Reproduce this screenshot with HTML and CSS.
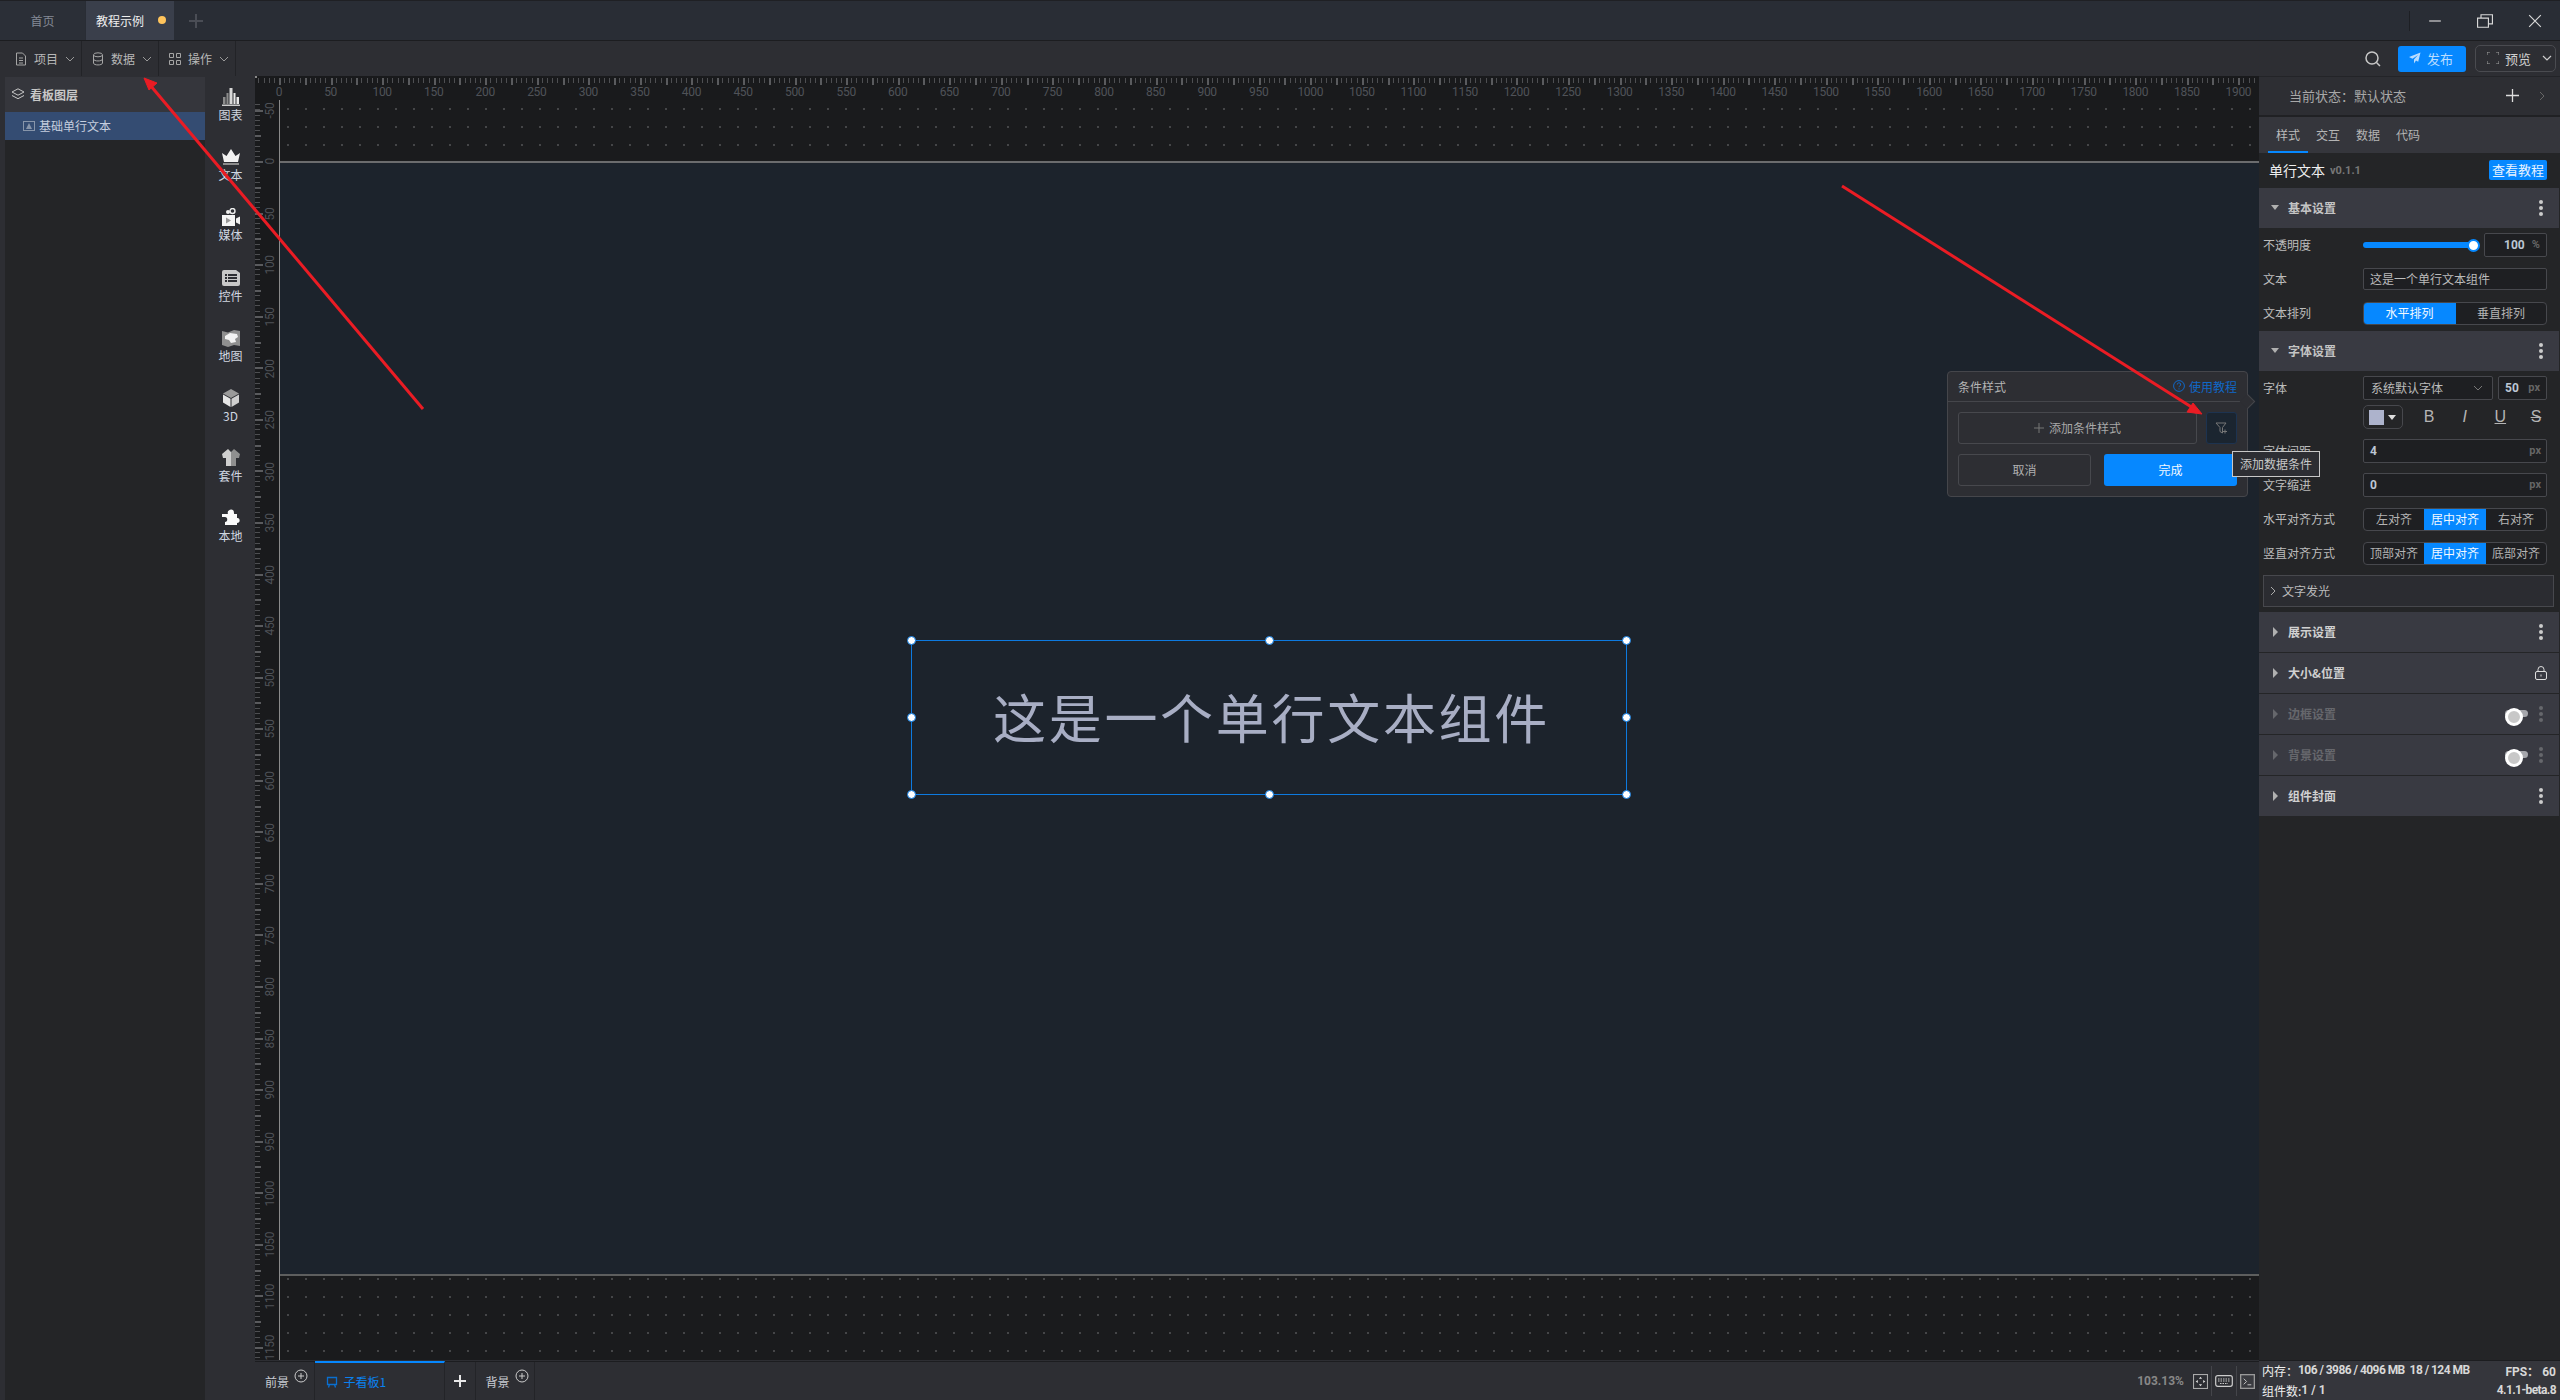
FILE: index.html
```html
<!DOCTYPE html>
<html lang="zh-CN">
<head>
<meta charset="utf-8">
<title>教程示例</title>
<link rel="stylesheet" href="styles.css">
</head>
<body>
<div class="app">
  <header class="tabbar">
    <div class="tab">首页</div>
    <div class="tab tab-on">教程示例<i class="dot"></i></div>
    <svg class="tab-add" viewBox="0 0 14 14"><path d="M7 0v14M0 7h14" stroke="#4a4d55" stroke-width="2" fill="none"/></svg>
    <div class="win">
      <i class="win-sep"></i>
      <svg class="win-ic" viewBox="0 0 12 12"><path d="M1 6h10" stroke="#d8d8d8" fill="none"/></svg>
      <svg class="win-ic" viewBox="0 0 14 12"><path d="M.5 3.500h9.500v8h-9.500zM3.500 3V.5h10v8H10.500" stroke="#d8d8d8" fill="none"/></svg>
      <svg class="win-ic" viewBox="0 0 12 12"><path d="M1 1l10 10M11 1L1 11" stroke="#d8d8d8" fill="none"/></svg>
    </div>
  </header>
  <nav class="toolbar">
    <div class="menu m1">
      <svg class="ic14" viewBox="0 0 14 14"><path d="M2.500 1h6l3 3v9h-9zM5 6h4M5 8.500h4M5 11h4" stroke="#a5a5a5" fill="none"/></svg>
      <span>项目</span><svg class="chev" viewBox="0 0 10 6"><path d="M1 1l4 4 4-4" stroke="#999" fill="none"/></svg>
    </div>
    <div class="menu m2">
      <svg class="ic14" viewBox="0 0 14 14"><ellipse cx="7" cy="2.800" rx="4.500" ry="2" stroke="#a5a5a5" fill="none"/><path d="M2.500 3v8c0 2.600 9 2.600 9 0V3M2.500 7c0 2.600 9 2.600 9 0" stroke="#a5a5a5" fill="none"/></svg>
      <span>数据</span><svg class="chev" viewBox="0 0 10 6"><path d="M1 1l4 4 4-4" stroke="#999" fill="none"/></svg>
    </div>
    <div class="menu m2">
      <svg class="ic14" viewBox="0 0 14 14"><path d="M1.500 1.500h4v4h-4zM8.500 1.500h4v4h-4zM1.500 8.500h4v4h-4zM8.500 8.500h4v4h-4z" stroke="#a5a5a5" fill="none"/></svg>
      <span>操作</span><svg class="chev" viewBox="0 0 10 6"><path d="M1 1l4 4 4-4" stroke="#999" fill="none"/></svg>
    </div>
    <div class="tool-right">
      <svg class="search" viewBox="0 0 16 16"><circle cx="7" cy="7" r="6" stroke="#c8c8c8" stroke-width="1.500" fill="none"/><path d="M11.500 11.500l3.500 3.500" stroke="#c8c8c8" stroke-width="1.500"/></svg>
      <button class="publish"><svg class="ic11" viewBox="0 0 12 12"><path d="M11.500.5L0 5l3.500 1.800L9 3 5 7.500V11.500l2-3 2.200 1.200z" fill="#b9dcff"/></svg>发布</button>
      <button class="preview"><svg class="ic12" viewBox="0 0 12 12"><path d="M0 3V0h3M9 0h3v3M12 9v3H9M3 12H0V9" stroke="#a0a0a0" fill="none"/></svg><span>预览</span><svg class="chev wide" viewBox="0 0 10 6"><path d="M1 1l4 4 4-4" stroke="#ccc" stroke-width="1.200" fill="none"/></svg></button>
    </div>
  </nav>
  <main class="main">
    <aside class="layers">
      <div class="layers-head">
        <svg class="ic14" viewBox="0 0 14 12"><path d="M7 .8l6 3.200-6 3.200L1 4zM1 7.500l6 3.200 6-3.200" stroke="#c8c8c8" fill="none"/></svg>
        看板图层
      </div>
      <div class="layer-row">
        <svg class="ic12" viewBox="0 0 12 10"><rect x=".5" y=".5" width="11" height="9" stroke="#8795aa" fill="none"/><path d="M3 8l3-6 3 6z" fill="#8795aa"/></svg>
        基础单行文本
      </div>
    </aside>
    <aside class="rail">
      <div class="rail-item"><svg class="rail-ic" viewBox="0 0 18 18"><path d="M0 16.500h18v1.500H0z" fill="#ccc"/><path d="M1 9h2.500v7H1zM4.500 5h2v11h-2z" fill="#8c8c8c"/><path d="M7.500 0h3v16h-3z" fill="#d8d8d8"/><path d="M11.500 5h2v11h-2zM14.500 9H17v7h-2.500z" fill="#e8e8e8"/></svg><span>图表</span></div>
      <div class="rail-item"><svg class="rail-ic" viewBox="0 0 18 18"><path d="M0 5l4.500 3L9 1l4.500 7L18 5l-2 9H2z" fill="#f2f2f2"/><path d="M1 15h16v2H1z" fill="#8c8c8c"/></svg><span>文本</span></div>
      <div class="rail-item"><svg class="rail-ic" viewBox="0 0 18 18"><circle cx="6" cy="4" r="2" fill="#eee"/><circle cx="10.500" cy="3" r="2.500" stroke="#eee" stroke-width="1.400" fill="none"/><path d="M0 7h13v11H0z" fill="#f5f5f5"/><path d="M14 10.500l4-2v8l-4-2z" fill="#f0f0f0"/><path d="M4 9.500l5 3-5 3z" fill="#999"/></svg><span>媒体</span></div>
      <div class="rail-item"><svg class="rail-ic" viewBox="0 0 18 18"><path d="M2 1h12l4 3v11a2 2 0 0 1-2 2H2a2 2 0 0 1-2-2V3a2 2 0 0 1 2-2z" fill="#c8c8c8"/><path d="M3 5h2v2H3zM3 8h2v2H3zM3 11h2v2H3zM6 5h9v2H6zM6 8h9v2H6zM6 11h9v2H6z" fill="#2d2e33"/></svg><span>控件</span></div>
      <div class="rail-item"><svg class="rail-ic" viewBox="0 0 18 18"><path d="M0 2l6 1.500L12 1l6 1v15l-6-1-6 2-6-2z" fill="#8f8f8f"/><path d="M3 7l5-3 7 1 1 3-3 2 1 3-5 1-2-3-4-1z" fill="#f2f2f2"/></svg><span>地图</span></div>
      <div class="rail-item"><svg class="rail-ic" viewBox="0 0 18 18"><path d="M9 0l8 4.500-8 4.500-8-4.500z" fill="#9a9a9a"/><path d="M1 5.500l7.500 4.300V18L1 13.500z" fill="#e6e6e6"/><path d="M17 5.500L9.500 9.800V18l7.500-4.500z" fill="#cfcfcf"/></svg><span>3D</span></div>
      <div class="rail-item"><svg class="rail-ic" viewBox="0 0 18 18"><path d="M6 0L0 5l1 4 3 0v8h5V3z" fill="#cfcfcf"/><path d="M12 0l6 5-1 4-3 0v8H9V3z" fill="#8f8f8f"/></svg><span>套件</span></div>
      <div class="rail-item"><svg class="rail-ic" viewBox="0 0 18 18"><path d="M6 5c-2-4 6-7 6-1 0 1 0 1 1 1h2v4c3-1 4 5 0 5v2H3v-3c3 0 3-5 0-5H0V5z" fill="#fafafa"/></svg><span>本地</span></div>
    </aside>
    <section class="workspace">
      <div class="ruler-h">
        <i class="corner"></i>
        <div class="h-labels">
          <span>0</span><span>50</span><span>100</span><span>150</span><span>200</span><span>250</span><span>300</span><span>350</span><span>400</span><span>450</span><span>500</span><span>550</span><span>600</span><span>650</span><span>700</span><span>750</span><span>800</span><span>850</span><span>900</span><span>950</span><span>1000</span><span>1050</span><span>1100</span><span>1150</span><span>1200</span><span>1250</span><span>1300</span><span>1350</span><span>1400</span><span>1450</span><span>1500</span><span>1550</span><span>1600</span><span>1650</span><span>1700</span><span>1750</span><span>1800</span><span>1850</span><span>1900</span>
        </div>
      </div>
      <div class="canvas-row">
        <div class="ruler-v">
          <div class="v-labels">
            <span>-50</span><span>0</span><span>50</span><span>100</span><span>150</span><span>200</span><span>250</span><span>300</span><span>350</span><span>400</span><span>450</span><span>500</span><span>550</span><span>600</span><span>650</span><span>700</span><span>750</span><span>800</span><span>850</span><span>900</span><span>950</span><span>1000</span><span>1050</span><span>1100</span><span>1150</span>
          </div>
        </div>
        <div class="canvas">
          <div class="stage">
            <div class="sel">
              <i class="h h1"></i><i class="h h2"></i><i class="h h3"></i><i class="h h4"></i><i class="h h5"></i><i class="h h6"></i><i class="h h7"></i><i class="h h8"></i>
              <div class="sel-text">这是一个单行文本组件</div>
            </div>
          </div>
        </div>
      </div>
      <footer class="bottombar">
        <div class="bt bt-fg">前景<svg class="plus-c" viewBox="0 0 14 14"><circle cx="7" cy="7" r="6" stroke="#ccc" fill="none"/><path d="M4 7h6M7 4v6" stroke="#ccc" fill="none"/></svg></div>
        <div class="bt bt-sub"><svg class="ic12" viewBox="0 0 12 12"><path d="M1.500 1.500h9v7h-9zM3.500 8.500L2.500 11.500M8.500 8.500l1 3" stroke="#0a6fd0" stroke-width="1.300" fill="none"/></svg>子看板1</div>
        <div class="bt bt-add"><svg class="ic12" viewBox="0 0 12 12"><path d="M6 0v12M0 6h12" stroke="#e8e8e8" stroke-width="2" fill="none"/></svg></div>
        <div class="bt bt-fg">背景<svg class="plus-c" viewBox="0 0 14 14"><circle cx="7" cy="7" r="6" stroke="#ccc" fill="none"/><path d="M4 7h6M7 4v6" stroke="#ccc" fill="none"/></svg></div>
        <div class="bt-right">
          <span class="zoomv">103.13%</span>
          <svg class="ic14b" viewBox="0 0 14 14"><rect x=".5" y=".5" width="13" height="13" stroke="#aaa" fill="none"/><path d="M7 2.500l1.500 2h-3zM7 11.500l1.500-2h-3zM2.500 7l2-1.500v3zM11.500 7l-2-1.500v3z" fill="#ddd"/></svg>
          <i class="bt-sep"></i>
          <svg class="kbd" viewBox="0 0 18 12"><rect x=".7" y=".7" width="16.600" height="10.600" rx="2" stroke="#ccc" stroke-width="1.200" fill="none"/><path d="M3 4h12M3 6h12M5 8.500h8" stroke="#ccc" stroke-dasharray="1.500 1"/></svg>
          <i class="bt-sep"></i>
          <svg class="ic14b" viewBox="0 0 16 16"><rect x=".7" y=".7" width="14.600" height="14.600" stroke="#999" stroke-width="1.400" fill="#3a3b40"/><path d="M4 5l3 3-3 3M8 11.500h4" stroke="#ccc" fill="none"/></svg>
        </div>
      </footer>
    </section>
    <aside class="props">
      <div class="state">
        <span>当前状态：默认状态</span>
        <svg class="state-plus" viewBox="0 0 13 13"><path d="M6.500 0v13M0 6.500h13" stroke="#ddd" stroke-width="1.300" fill="none"/></svg>
        <svg class="state-next" viewBox="0 0 6 10"><path d="M1 1l4 4-4 4" stroke="#666" fill="none"/></svg>
      </div>
      <div class="ptabs"><span class="ptab on">样式</span><span class="ptab">交互</span><span class="ptab">数据</span><span class="ptab">代码</span></div>
      <div class="ptitle"><strong>单行文本</strong><em>v0.1.1</em><button>查看教程</button></div>
      <div class="sec"><i class="tri-d"></i><b>基本设置</b><i class="dots"></i></div>
      <div class="row"><label>不透明度</label>
        <div class="slider"><i class="thumb"></i></div>
        <div class="inp inp-op"><b>100</b><small>%</small></div>
      </div>
      <div class="row"><label>文本</label><div class="inp inp-text">这是一个单行文本组件</div></div>
      <div class="row"><label>文本排列</label><div class="seg seg2"><span class="on">水平排列</span><span>垂直排列</span></div></div>
      <div class="sec sec-gap"><i class="tri-d"></i><b>字体设置</b><i class="dots"></i></div>
      <div class="row"><label>字体</label>
        <div class="inp inp-sel">系统默认字体<svg class="chev" viewBox="0 0 10 6"><path d="M1 1l4 4 4-4" stroke="#777" fill="none"/></svg></div>
        <div class="inp inp-num"><b>50</b><small>px</small></div>
      </div>
      <div class="row row-color">
        <div class="colorbox"><i class="swatch"></i><i class="tri-w"></i></div>
        <div class="fmt"><span class="f-b">B</span><span class="f-i">I</span><span class="f-u">U</span><span class="f-s">S</span></div>
      </div>
      <div class="row"><label>字体间距</label><div class="inp inp-wide"><b>4</b><small>px</small></div></div>
      <div class="row"><label>文字缩进</label><div class="inp inp-wide"><b>0</b><small>px</small></div></div>
      <div class="row"><label>水平对齐方式</label><div class="seg seg3"><span>左对齐</span><span class="on">居中对齐</span><span>右对齐</span></div></div>
      <div class="row"><label>竖直对齐方式</label><div class="seg seg3"><span>顶部对齐</span><span class="on">居中对齐</span><span>底部对齐</span></div></div>
      <div class="glow"><svg class="chev-r" viewBox="0 0 6 10"><path d="M1 1l4 4-4 4" stroke="#aaa" fill="none"/></svg>文字发光</div>
      <div class="sec sec-list"><i class="tri-r"></i><b>展示设置</b><i class="dots"></i></div>
      <div class="sec sec-list"><i class="tri-r"></i><b>大小&amp;位置</b><svg class="lock" viewBox="0 0 12 14"><rect x=".5" y="5.500" width="11" height="8" rx="1.500" stroke="#ddd" fill="none"/><path d="M3 5.500V3.500a3 3 0 0 1 6 0v2M6 8.500v2" stroke="#ddd" fill="none"/></svg></div>
      <div class="sec sec-list off"><i class="tri-r"></i><b>边框设置</b><i class="sw"></i><i class="dots"></i></div>
      <div class="sec sec-list off"><i class="tri-r"></i><b>背景设置</b><i class="sw"></i><i class="dots"></i></div>
      <div class="sec sec-list"><i class="tri-r"></i><b>组件封面</b><i class="dots"></i></div>
      <div class="status">
        <div class="st-row"><span>内存：</span><b class="st-mem">106 / 3986 / 4096 MB&nbsp; 18 / 124 MB</b><b class="st-r">FPS：&nbsp;60</b></div>
        <div class="st-row"><span>组件数:</span><b>1 / 1</b><b class="st-r st-ver">4.1.1-beta.8</b></div>
      </div>
    </aside>
  </main>

  <div class="pop">
    <div class="pop-head"><span>条件样式</span><a><svg class="ic12" viewBox="0 0 12 12"><circle cx="6" cy="6" r="5.400" stroke="#1068c8" fill="none"/><path d="M4.300 4.500a1.700 1.700 0 1 1 2.500 1.500c-.6.3-.8.600-.8 1.200M6 8.400v1" stroke="#1068c8" fill="none"/></svg>使用教程</a></div>
    <div class="pop-body">
      <div class="pop-line">
        <div class="pop-add"><svg class="ic10" viewBox="0 0 10 10"><path d="M5 0v10M0 5h10" stroke="#777" fill="none"/></svg>添加条件样式</div>
        <div class="pop-filter"><svg class="ic14" viewBox="0 0 14 14"><path d="M1 2h10L7.500 6.500V12L5 10.500V6.500zM10 8.500v4M8 10.500h4" stroke="#777" fill="none"/></svg></div>
      </div>
      <div class="pop-line pop-actions"><button class="btn-c">取消</button><button class="btn-ok">完成</button></div>
    </div>
    <i class="pop-arrow"></i>
  </div>
  <div class="tip">添加数据条件</div>

  <svg class="arrows" viewBox="0 0 2560 1400">
    <path d="M423 409L150 85" stroke="#ea1c24" stroke-width="3" fill="none"/>
    <path d="M144 78l13 5-8 7z" fill="#ea1c24" stroke="#ea1c24"/>
    <path d="M1842 186L2193 408" stroke="#ea1c24" stroke-width="3" fill="none"/>
    <path d="M2202 414l-15-2 6-9z" fill="#ea1c24" stroke="#ea1c24"/>
  </svg>
</div>
</body>
</html>
```

FILE: styles.css
```css
* { box-sizing: border-box; }
html, body { margin: 0; padding: 0; background: #242527; }
body { font-family: "Noto Sans CJK SC", "Noto Sans", sans-serif; font-size: 12px; color: #c4c4c4; }
i { display: block; font-style: normal; }
button { font: inherit; border: 0; padding: 0 0 1px; }
svg { display: block; flex: none; }

.app { position: relative; width: 2560px; height: 1400px; overflow: hidden; display: flex; flex-direction: column; background: #2d2e33; }

/* tabs */
.tabbar { height: 41px; flex: none; display: flex; align-items: stretch; background: #292d35; border-top: 1px solid #1f2024; border-bottom: 1px solid #1c1d20; }
.tab { width: 85px; margin-right: 1px; background: #2b2f37; color: #848a95; display: flex; align-items: center; justify-content: center; padding-bottom: 1px; }
.tab-on { width: 88px; background: #3a3f4b; color: #f0f0f0; justify-content: flex-start; padding-left: 10px; }
.dot { width: 8px; height: 8px; border-radius: 50%; background: #ffc45c; margin-left: 14px; }
.tab-add { width: 14px; height: 14px; align-self: center; margin-left: 14px; }
.win { margin-left: auto; display: flex; align-items: center; }
.win-sep { width: 1px; height: 20px; background: #1d1f24; margin-right: 17px; }
.win-ic { width: 16px; height: 14px; margin-right: 34px; }
.win-ic:last-child { margin-right: 17px; }

/* toolbar */
.toolbar { height: 35px; flex: none; display: flex; align-items: center; background: #2d2e33; }
.menu { height: 35px; display: flex; align-items: center; border-right: 1px solid #222327; color: #b8b8b8; }
.m1 { width: 82px; padding-left: 14px; }
.m2 { width: 77px; padding-left: 9px; }
.ic14 { width: 14px; height: 14px; }
.ic12 { width: 12px; height: 12px; }
.ic11 { width: 12px; height: 12px; }
.ic10 { width: 10px; height: 10px; }
.menu span { margin-left: 6px; padding-bottom: 1px; }
.chev { width: 10px; height: 6px; margin-left: 7px; }
.tool-right { margin-left: auto; display: flex; align-items: center; padding-right: 4px; }
.search { width: 16px; height: 16px; margin-right: 17px; }
.publish { width: 68px; height: 26px; background: #0688ff; color: #b9dcff; border-radius: 3px; display: flex; align-items: center; font-size: 13px; padding-left: 11px; gap: 6px; margin-right: 9px; }
.preview { width: 81px; height: 27px; background: transparent; color: #d0d0d0; border: 1px solid #4a4b50; border-radius: 5px; display: flex; align-items: center; padding-left: 11px; font-size: 13px; gap: 6px; }
.chev.wide { margin-left: 5px; }

/* main */
.main { flex: 1; min-height: 0; display: flex; }
.layers { width: 200px; margin-left: 5px; margin-top: 1px; background: #242527; margin-right: 1px; flex: none; }
.layers-head { height: 35px; background: #35363c; display: flex; align-items: center; padding: 0 0 1px 6px; gap: 5px; font-weight: 700; color: #c8c8c8; }
.layer-row { height: 28px; background: #344c72; display: flex; align-items: center; padding: 0 0 1px 18px; gap: 4px; color: #c5cede; }
.rail { width: 49px; flex: none; padding-top: 4px; display: flex; flex-direction: column; }
.rail-item { height: 60.200px; flex: none; display: flex; flex-direction: column; align-items: center; padding-top: 8px; color: #d0d6e0; line-height: 15px; }
.rail-ic { width: 18px; height: 18px; margin-bottom: 1px; }

/* rulers */
.workspace { width: 2004px; flex: none; display: flex; flex-direction: column; }
.ruler-h {
  height: 24px; flex: none; position: relative; overflow: hidden; background-color: #191a1c;
  background-image:
    repeating-linear-gradient(90deg, #5a5b5e 24px 26px, transparent 26px 49.780px),
    repeating-linear-gradient(90deg, #4e4f52 24px 25px, transparent 25px 29.156px);
  background-size: 100% 7px, 100% 5px;
  background-position: 0 2px, 0 2px;
  background-repeat: no-repeat;
}
.corner { position: absolute; left: 0; top: 0; width: 2px; height: 2px; background: #8a8a8a; }
.h-labels { display: flex; margin-left: -1.780px; padding-top: 9px; font: 12px/14px "Liberation Sans Narrow", "Roboto", sans-serif; letter-spacing: -.3px; color: #4f5258; }
.h-labels span { flex: 0 0 51.5625px; text-align: center; }
.canvas-row { height: 1260px; flex: none; display: flex; margin-bottom: 0; }
.ruler-v {
  width: 24px; flex: none; overflow: hidden; background-color: #191a1c;
  background-image:
    repeating-linear-gradient(180deg, #5a5b5e 9.500px 11.500px, transparent 11.500px 61.060px),
    repeating-linear-gradient(180deg, #5a5b5e 35.280px 37.280px, transparent 37.280px 86.840px),
    repeating-linear-gradient(180deg, #4e4f52 9.500px 10.500px, transparent 10.500px 14.656px);
  background-size: 8px 100%, 6px 100%, 5px 100%;
  background-repeat: no-repeat;
}
.v-labels { margin-top: -15.300px; margin-left: 9px; display: flex; flex-direction: column; font: 12px/12px "Liberation Sans Narrow", "Roboto", sans-serif; letter-spacing: -.3px; color: #4f5258; }
.v-labels span { flex: 0 0 51.5625px; writing-mode: vertical-rl; transform: rotate(180deg); text-align: center; width: 12px; }
.canvas {
  flex: 1; min-width: 0; border-left: 1px solid #8a8a8a; padding-top: 61px; background-color: #1a1b1d;
  background-image: radial-gradient(circle at 9px 9px, #454648 0.900px, transparent 1.100px);
  background-size: 18px 18px; background-position: -1px 0;
}
.stage { position: relative; height: 1115px; background: #1c232c; border-top: 2px solid #6b6c6e; border-bottom: 2px solid #5d5e5e; }
.sel { position: absolute; left: 631px; top: 477px; width: 716px; height: 155px; border: 1px solid #0d7ae0; display: flex; align-items: center; justify-content: center; }
.sel-text { font-size: 53px; line-height: 70px; letter-spacing: 2.700px; color: #a8aec4; white-space: nowrap; margin: 0 0 4px 5px; }
.h { position: absolute; width: 9px; height: 9px; border-radius: 50%; background: #fff; border: 1.500px solid #0d7ae0; }
.h1 { left: -5px; top: -5px; } .h2 { left: 353px; top: -5px; } .h3 { right: -5px; top: -5px; }
.h4 { left: -5px; top: 72px; } .h5 { right: -5px; top: 72px; }
.h6 { left: -5px; bottom: -5px; } .h7 { left: 353px; bottom: -5px; } .h8 { right: -5px; bottom: -5px; }

/* bottom */
.bottombar { height: 39px; flex: none; margin-top: 1px; display: flex; align-items: stretch; background: #2d2e33; border-top: 1px solid #1c1d20; }
.bt { position: relative; border-right: 1px solid #232428; display: flex; align-items: center; flex: none; }
.bt-fg { width: 59.500px; padding-left: 10px; color: #c8cbd2; }
.plus-c { position: absolute; left: 39px; top: 7px; width: 14px; height: 14px; }
.bt-sub { width: 130px; padding-left: 11px; gap: 6px; color: #0a82f0; border-top: 2px solid #0688ff; margin-top: -1px; }
.bt-add { width: 31px; justify-content: center; }
.bt-right { margin-left: auto; display: flex; align-items: center; padding-right: 4px; }
.zoomv { font: 700 12px "Liberation Sans Narrow", "Roboto", sans-serif; color: #888; margin-right: 9px; }
.ic14b { width: 15px; height: 15px; }
.kbd { width: 18px; height: 12px; }
.bt-sep { width: 1px; height: 30px; background: #44454a; margin: 0 3px; }

/* props */
.props { width: 301px; flex: none; display: flex; flex-direction: column; background: #242527; border-top: 1px solid #232428; position: relative; }
.state { height: 40px; flex: none; background: #2d2e33; display: flex; align-items: center; padding: 0 0 1px 30px; font-size: 13px; color: #a8a8a8; border-bottom: 2px solid #202124; }
.state-plus { width: 13px; height: 13px; margin-left: 100px; }
.state-next { width: 6px; height: 10px; margin-left: 20px; }
.ptabs { height: 36px; flex: none; background: #35363c; display: flex; padding-left: 9px; }
.ptab { width: 40px; text-align: center; line-height: 36px; color: #b4b4b4; }
.ptab.on { border-bottom: 2px solid #0688ff; color: #bbb; }
.ptitle { height: 35px; flex: none; display: flex; align-items: center; padding: 0 0 1px 10px; color: #eee; }
.ptitle strong { font-size: 14px; font-weight: 400; }
.ptitle em { font: 700 11px "Liberation Sans Narrow", "Roboto", sans-serif; color: #777; margin-left: 5px; }
.ptitle button { margin-left: auto; margin-right: 13px; width: 58px; height: 20px; background: #0688ff; color: #e8f3ff; font-size: 13px; line-height: 18px; border-radius: 2px; }
.sec { height: 40px; flex: none; background: #393a42; display: flex; align-items: center; padding: 0 0 1px 11px; margin-right: 1px; color: #c4c4c4; }
.sec b { margin-left: 9px; font-weight: 700; }
.sec-gap { margin-top: 1px; }
.sec-list { margin-top: 1px; color: #d0d0d0; }
.off { color: #66676c; }
.tri-d { width: 0; height: 0; border: 4.500px solid transparent; border-top: 5px solid #b0b0b0; border-bottom: 0; margin: 0 0 0 1px; }
.tri-r { width: 0; height: 0; border: 5px solid transparent; border-left: 5px solid #b0b0b0; border-right: 0; margin-left: 3px; margin-right: 1px; }
.off .tri-r { border-left-color: #66676c; }
.dots { position: relative; width: 4px; height: 4px; border-radius: 50%; background: #ccc; margin-left: auto; margin-right: 16px; box-shadow: 0 -6px 0 #ccc, 0 6px 0 #ccc; }
.off .dots { background: #66676c; box-shadow: 0 -6px 0 #66676c, 0 6px 0 #66676c; margin-left: 11px; }
.lock { width: 12px; height: 14px; margin-left: auto; margin-right: 12px; }
.sw { position: relative; flex: none; width: 23px; height: 7px; border-radius: 4px; background: #a6a7ac; margin-left: auto; }
.sw::before { content: ""; position: absolute; left: 0; top: -2.500px; width: 12px; height: 12px; border-radius: 50%; background: #c8c8c8; border: 3px solid #fff; }

.row { height: 34px; flex: none; display: flex; align-items: center; padding-left: 4px; padding-right: 12px; }
.row label { width: 100px; flex: none; color: #bcbcbc; padding-bottom: 2px; }
.row-color { height: 24px; margin-bottom: 5px; padding-left: 104px; }
.inp { height: 24px; background: #1e1f22; border: 1px solid #47484d; border-radius: 2px; display: flex; align-items: center; color: #bbb; padding: 0 6px 1px; }
.inp b { font: 700 12px "Liberation Sans Narrow", "Roboto", sans-serif; color: #bcc6d4; }
.inp small { font: 700 11px "Liberation Sans Narrow", "Roboto", sans-serif; color: #666; margin-left: auto; }
.slider { position: relative; width: 114px; height: 6px; border-radius: 3px; background: #0688ff; flex: none; }
.thumb { position: absolute; right: -3px; top: -3.500px; width: 13px; height: 13px; border-radius: 50%; background: #fff; border: 2px solid #0688ff; }
.inp-op { width: 63px; margin-left: 7px; }
.inp-op b { margin-left: 13px; }
.inp-text { width: 184px; height: 22px; padding-left: 6px; }
.seg { width: 184px; height: 23px; display: flex; border: 1px solid #47484d; border-radius: 4px; overflow: hidden; background: #1e1f22; color: #b4b4b4; }
.seg span { display: flex; align-items: center; justify-content: center; flex: 1; padding-bottom: 1px; }
.seg .on { background: #0688ff; color: #f2f8ff; }
.seg2 span.on { flex: 0 0 93px; margin: -1px 0 -1px -1px; }
.seg3 span.on { flex: 0 0 62px; margin: -1px 0; }
.inp-sel { width: 130px; padding-left: 7px; }
.inp-sel .chev { margin-left: auto; margin-right: 3px; }
.inp-num { width: 49px; margin-left: 5px; padding-left: 6px; }
.inp-wide { width: 184px; padding-left: 6px; padding-right: 5px; }
.colorbox { width: 40px; height: 24px; border: 1px solid #47484d; border-radius: 5px; display: flex; align-items: center; padding-left: 5px; background: #242527; }
.swatch { width: 15px; height: 15px; background: #adb3cc; }
.tri-w { width: 0; height: 0; border: 4.500px solid transparent; border-top: 5px solid #ddd; border-bottom: 0; margin-left: 4px; }
.fmt { flex: 1; display: flex; justify-content: space-between; padding: 0 4px 0 18px; font: 16px "Liberation Sans", sans-serif; color: #b4b4b4; }
.fmt span { width: 16px; text-align: center; }
.f-i { font-style: italic; }
.f-u { text-decoration: underline; }
.f-s { text-decoration: line-through; }
.glow { margin: 5px 6px 4px 4px; height: 32px; flex: none; border: 1px solid #47484d; background: #2b2c31; display: flex; align-items: center; padding: 0 0 1px 6px; gap: 6px; color: #bbb; font-size: 12px; }
.chev-r { width: 6px; height: 10px; }
.status { margin-top: auto; height: 40px; flex: none; background: #35363c; border-top: 1px solid #1c1d20; padding: 0 4px 0 3px; color: #eee; }
.st-row { height: 20px; display: flex; align-items: center; padding-bottom: 2px; }
.st-row b { font: 700 12px "Liberation Sans Narrow", "Roboto", sans-serif; color: #d8d8d8; }
.st-row .st-mem { letter-spacing: -.55px; }
.st-row .st-ver { letter-spacing: -.6px; }
.st-r { margin-left: auto; }

/* popover */
.pop { position: absolute; left: 1947px; top: 371px; width: 301px; height: 126px; background: #2d2e33; border: 1px solid #45464b; border-radius: 4px; }
.pop-head { height: 30px; display: flex; align-items: center; justify-content: space-between; padding: 0 10px 1px; border-bottom: 1px solid #45464b; color: #b4b4b4; }
.pop-head a { display: flex; align-items: center; gap: 4px; color: #1068c8; }
.pop-body { padding: 10px 10px 0; }
.pop-line { display: flex; justify-content: space-between; }
.pop-add { width: 239px; height: 32px; border: 1px solid #47484d; border-radius: 3px; display: flex; align-items: center; justify-content: center; gap: 5px; color: #a8a8a8; padding-bottom: 1px; }
.pop-filter { width: 31px; height: 32px; background: #1b2530; border: 1px solid #1d3350; border-radius: 3px; display: flex; align-items: center; justify-content: center; }
.pop-actions { margin-top: 10px; }
.btn-c { width: 133px; height: 32px; background: transparent; border: 1px solid #47484d; border-radius: 3px; color: #b0b0b0; }
.btn-ok { width: 133px; height: 32px; background: #0688ff; border-radius: 3px; color: #f2f8ff; }
.pop-arrow { position: absolute; right: -6px; top: 24px; width: 11px; height: 11px; background: #2d2e33; border-right: 1px solid #45464b; border-top: 1px solid #45464b; transform: rotate(45deg); }
.tip { position: absolute; left: 2232px; top: 451px; width: 88px; height: 26px; background: #2d2e33; border: 1px solid #c8c8c8; color: #c8c8c8; display: flex; align-items: center; justify-content: center; white-space: nowrap; padding-bottom: 1px; }
.arrows { position: absolute; left: 0; top: 0; width: 2560px; height: 1400px; pointer-events: none; }
```
